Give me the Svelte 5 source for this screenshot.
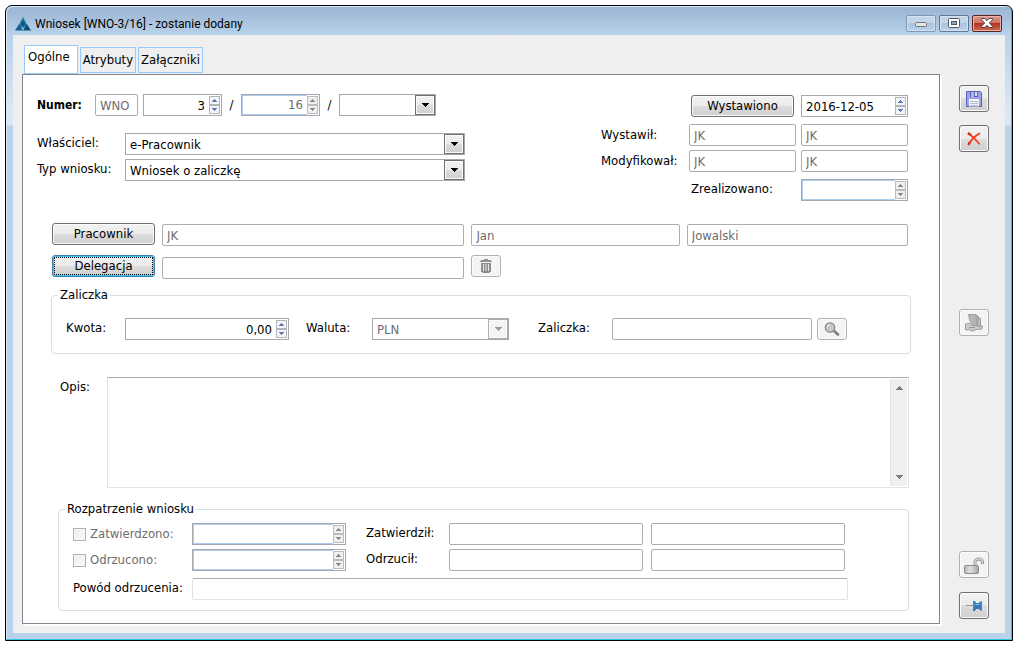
<script lang="ts">
  let activeTab = $state('Ogólne');
  const tabs = ['Ogólne', 'Atrybuty', 'Załączniki'];

  let amount = $state('0,00');
  let number = $state('3');
  let issueDate = $state('2016-12-05');
  let description = $state('');
</script>

{#snippet spinner(id: string, label: string, value: string, disabled: boolean, alignRight: boolean)}
  <span class="spinner" class:off={disabled}>
    <input {id} aria-label={label} type="text" {value} {disabled} class:right={alignRight} />
    <span class="steps">
      <button type="button" {disabled} aria-label="Zwiększ"><svg width="5" height="3" viewBox="0 0 5 3"><path d="M2 0h1v1h1v1h1v1H0V2h1V1h1z" /></svg></button>
      <button type="button" {disabled} aria-label="Zmniejsz"><svg width="5" height="3" viewBox="0 0 5 3"><path d="M0 0h5v1H4v1H3v1H2V2H1V1H0z" /></svg></button>
    </span>
  </span>
{/snippet}

{#snippet combo(id: string, label: string, value: string, disabled: boolean)}
  <span class="combo" class:off={disabled}>
    <select {id} aria-label={label} {disabled}><option>{value}</option></select>
    <span class="drop"><svg width="7" height="4" viewBox="0 0 7 4"><path d="M0 0h7v1H6v1H5v1H4v1H3V3H2V2H1V1H0z" /></svg></span>
  </span>
{/snippet}

<div class="page">
  <div class="window">
    <header>
      <svg class="logo" width="16" height="14" viewBox="0 0 16 14">
        <path d="M8 0l3.500 6.500h-7z" fill="#1b7fa6" />
        <path d="M8 3l3.500 5L8 11 4.500 8z" fill="#0d5c86" />
        <path d="M4.400 6.500L8 13.500H0z" fill="#14618f" />
        <path d="M11.600 6.500L16 13.500H8z" fill="#0a4f7c" />
        <path d="M4.500 7.500L8 10.500l3.500-3" fill="none" stroke="#4fa3c4" stroke-width=".6" />
      </svg>
      <h1>Wniosek [WNO-3/16] - zostanie dodany</h1>
      <div class="caption">
        <button type="button" aria-label="Minimalizuj">
          <svg width="12" height="5" viewBox="0 0 12 5"><rect x=".5" y=".5" width="11" height="4" rx="1" fill="#e6e6e6" stroke="#6b7480" /></svg>
        </button>
        <button type="button" class="max" aria-label="Maksymalizuj">
          <svg width="12" height="10" viewBox="0 0 12 10"><rect x=".5" y=".5" width="11" height="9" rx="1" fill="#fff" stroke="#4f5a68" /><rect x="3.500" y="3.500" width="5" height="3" fill="#8fa8c6" stroke="#4f5a68" /></svg>
        </button>
        <button type="button" class="close" aria-label="Zamknij">
          <svg width="12" height="10" viewBox="0 0 12 10"><path d="M.5.5h3.300L6 2.700 8.200.5h3.300v1.300L8.300 5l3.200 3.200v1.300H8.200L6 7.300 3.800 9.500H.5V8.200L3.700 5 .5 1.800z" fill="#fff" stroke="#4a4450" /></svg>
        </button>
      </div>
    </header>

    <div class="client">
      <main>
        <div class="tabs" role="tablist">
          {#each tabs as tab}
            <button type="button" role="tab" aria-selected={activeTab === tab} class:active={activeTab === tab} onclick={() => (activeTab = tab)}>{tab}</button>
          {/each}
        </div>

        <form class="panel" onsubmit={(e) => e.preventDefault()}>
          <section class="top">
            <div class="ident">
              <div class="number">
                <label for="number" class="strong">Numer:</label>
                <input class="field" aria-label="Seria" value="WNO" disabled />
                {@render spinner('number', 'Numer', number, false, true)}
                <span class="slash">/</span>
                {@render spinner('year', 'Rok', '16', true, true)}
                <span class="slash">/</span>
                {@render combo('series', 'Rejestr', '', false)}
              </div>
              <div class="pair">
                <label for="owner">Właściciel:</label>
                {@render combo('owner', 'Właściciel', 'e-Pracownik', false)}
                <label for="kind">Typ wniosku:</label>
                {@render combo('kind', 'Typ wniosku', 'Wniosek o zaliczkę', false)}
              </div>
            </div>

            <div class="issue">
              <div class="issue-row">
                <button type="button" class="push">Wystawiono</button>
                {@render spinner('issued', 'Wystawiono', issueDate, false, false)}
              </div>
              <div class="signed">
                <label for="made">Wystawił:</label>
                <input id="made" class="field" value="JK" disabled />
                <input class="field" aria-label="Wystawił, operator" value="JK" disabled />
                <label for="changed">Modyfikował:</label>
                <input id="changed" class="field" value="JK" disabled />
                <input class="field" aria-label="Modyfikował, operator" value="JK" disabled />
              </div>
              <div class="issue-row">
                <label for="done">Zrealizowano:</label>
                {@render spinner('done', 'Zrealizowano', '', true, false)}
              </div>
            </div>
          </section>

          <section class="people">
            <button type="button" class="push">Pracownik</button>
            <input class="field" aria-label="Kod pracownika" value="JK" disabled />
            <input class="field" aria-label="Imię" value="Jan" disabled />
            <input class="field" aria-label="Nazwisko" value="Jowalski" disabled />
            <button type="button" class="push focused">Delegacja</button>
            <input class="field" aria-label="Delegacja" value="" disabled />
            <button type="button" class="push mini" disabled aria-label="Usuń delegację">
              <svg width="12" height="14" viewBox="0 0 12 14"><path d="M4 0h4v1h3v1h1v1H0V2h1V1h3z" fill="#909090" /><path d="M1 4h10v9H9.500v1h-7v-1H1z" fill="#8c8c8c" /><path d="M3 5h1v7H3zM5.500 5h1v7h-1zM8 5h1v7H8z" fill="#e8e8e8" /></svg>
            </button>
          </section>

          <fieldset class="advance">
            <legend>Zaliczka</legend>
            <div class="advance-row">
              <label for="amount">Kwota:</label>
              {@render spinner('amount', 'Kwota', amount, false, true)}
              <label for="currency" class="near">Waluta:</label>
              {@render combo('currency', 'Waluta', 'PLN', true)}
              <label for="advance" class="far">Zaliczka:</label>
              <input id="advance" class="field" value="" disabled />
              <button type="button" class="push mini" disabled aria-label="Szukaj">
                <svg width="16" height="14" viewBox="0 0 16 14"><path d="M9.500 8.500l4.500 4" stroke="#7d7d7d" stroke-width="2.600" stroke-linecap="round" /><circle cx="6" cy="5.500" r="4.700" fill="#c6c6c6" stroke="#8b8b8b" stroke-width="1.300" /><path d="M3.500 5a2.500 2.500 0 0 1 2.500-2.300" fill="none" stroke="#ededed" stroke-width="1.300" /></svg>
              </button>
            </div>
          </fieldset>

          <section class="notes">
            <label for="notes">Opis:</label>
            <div class="memo">
              <textarea id="notes" bind:value={description}></textarea>
              <div class="track">
                <svg width="7" height="4" viewBox="0 0 7 4"><path d="M3 0h1v1h1v1h1v1h1v1H0V3h1V2h1V1h1z" fill="#7d7d7d" /></svg>
                <svg width="7" height="4" viewBox="0 0 7 4"><path d="M0 0h7v1H6v1H5v1H4v1H3V3H2V2H1V1H0z" fill="#7d7d7d" /></svg>
              </div>
            </div>
          </section>

          <fieldset class="review">
            <legend>Rozpatrzenie wniosku</legend>
            <div class="review-grid">
              <label class="check"><input type="checkbox" disabled />Zatwierdzono:</label>
              {@render spinner('approved', 'Data zatwierdzenia', '', true, false)}
              <label for="approver" class="who">Zatwierdził:</label>
              <div class="both">
                <input id="approver" class="field" value="" disabled />
                <input class="field" aria-label="Zatwierdził, operator" value="" disabled />
              </div>
              <label class="check"><input type="checkbox" disabled />Odrzucono:</label>
              {@render spinner('rejected', 'Data odrzucenia', '', true, false)}
              <label for="rejecter" class="who">Odrzucił:</label>
              <div class="both">
                <input id="rejecter" class="field" value="" disabled />
                <input class="field" aria-label="Odrzucił, operator" value="" disabled />
              </div>
            </div>
            <div class="reason">
              <label for="reason">Powód odrzucenia:</label>
              <input id="reason" class="field pale" value="" />
            </div>
          </fieldset>
        </form>
      </main>

      <aside>
        <button type="button" class="push tool" aria-label="Zapisz">
          <svg width="16" height="16" viewBox="0 0 16 16">
            <path d="M.5.5h14l1 1v14H.5z" fill="#9da2ee" stroke="#5c61b5" />
            <path d="M4 1h8v5H4z" fill="#5a62b4" /><path d="M5 1h3v5H5z" fill="#aeb6e8" /><path d="M9 1h2v4H9z" fill="#dfe4f6" />
            <path d="M3 8h10v7.500H3z" fill="#f4f6fc" /><path d="M4 10.500h8M4 12.500h8M4 14.500h8" stroke="#b4bacb" />
          </svg>
        </button>
        <button type="button" class="push tool" aria-label="Anuluj">
          <svg width="14" height="14" viewBox="0 0 14 14"><path d="M1.500 1.500C5 4 9 8 12.500 12" fill="none" stroke="#ff3b18" stroke-width="1.600" stroke-linecap="round" /><path d="M12.500 1.500C8 4 4 8 1.800 12.500" fill="none" stroke="#f23310" stroke-width="1.600" stroke-linecap="round" /><path d="M1 1l3 2.200M2.800 10L1.400 13" stroke="#e8240f" stroke-width="2.200" /></svg>
        </button>
        <span class="grow-a"></span>
        <button type="button" class="push tool" disabled aria-label="Dokumenty">
          <svg width="18" height="18" viewBox="0 0 18 18">
            <path d="M13 3.500l2.500 1v9h-4z" fill="#c6c6c6" stroke="#9a9a9a" />
            <path d="M10.500 1.500l2.500.5v11h-3z" fill="#bdbdbd" stroke="#959595" />
            <path d="M3.500.5H11l.5 12-4.500-2.500C5 8 4 4 3.500.5z" fill="#b8b8b8" stroke="#a0a0a0" />
            <path d="M.5 10c3-1.500 5-.5 7 1.500h4l1.500 1 4.500-.5-.5 3-5.500.5-4 1.500-4-1.500-3 .5z" fill="#cbcbcb" stroke="#9c9c9c" />
            <path d="M4 13.500h6" stroke="#979797" />
          </svg>
        </button>
        <span class="grow-b"></span>
        <button type="button" class="push tool" disabled aria-label="Odblokuj">
          <svg width="20" height="18" viewBox="0 0 20 18">
            <defs><linearGradient id="lock" x2="1" y2="0"><stop stop-color="#b5b5b5" /><stop offset=".4" stop-color="#e2e2e2" /><stop offset="1" stop-color="#a3a3a3" /></linearGradient></defs>
            <path d="M11 9V5.500a4 4 0 0 1 7.500 0V8" fill="none" stroke="#919191" stroke-width="3" /><path d="M11 9V5.500a4 4 0 0 1 7.500 0V7.500" fill="none" stroke="#dadada" stroke-width="1.400" />
            <rect x=".5" y="9.500" width="14" height="8" rx="1.500" fill="url(#lock)" stroke="#8b8b8b" />
          </svg>
        </button>
        <button type="button" class="push tool pin" aria-label="Przypnij">
          <svg width="16" height="10" viewBox="0 0 16 10"><path d="M0 4.500h8" stroke="#9b9b9b" /><path d="M7 0h2l1 2h3l1-1.500h2v9h-2L13 8h-3l-1 2H7z" fill="#2f77bd" /><path d="M9.500 3.500h4" stroke="#8fc4ee" /><path d="M8 1v7M15 1.500v7" stroke="#5b9fd8" stroke-width=".8" /></svg>
        </button>
      </aside>
    </div>
  </div>
</div>

<style>
  :global(body) { margin: 0; background: #fff; }
  * { box-sizing: border-box; }

  .page {
    display: flex;
    min-height: 100vh;
    padding: 5px;
    color: #000;
    font: 13px/14px 'DejaVu Sans Condensed', 'DejaVu Sans', sans-serif;
  }
  button, input, select, textarea { margin: 0; padding: 0; font: inherit; color: inherit; border-radius: 0; }
  svg { display: block; flex: none; }

  .window {
    flex: 1;
    display: flex;
    flex-direction: column;
    min-width: 0;
    padding: 1px 7px 7px;
    border: 1px solid #000;
    border-radius: 7px 7px 0 0;
    box-shadow: inset -1px -1px #2cc9dd, inset 1px 1px #dce9f7;
    background: linear-gradient(#99b4d1, #b9d1ea 29px, #d9e6f4 100px, #dbe7f5 119px, #b9d1ea 120px);
  }

  header { display: flex; align-items: center; height: 28px; padding: 0 2px; }
  .logo { margin: 5px 4px 0 0; }
  h1 { flex: 1; margin: 6px 0 0; font: 12px/16px Roboto, 'Open Sans', sans-serif; white-space: nowrap; }
  .caption { display: flex; gap: 3px; margin: 4px 1px 0 0; }
  .caption button {
    display: grid;
    place-items: center;
    width: 30px;
    height: 17px;
    border: 1px solid #8097b3;
    border-radius: 2px;
    background: linear-gradient(#c3d5e9 50%, #abc3dd 50%, #bdd2ea);
    box-shadow: inset 0 0 0 1px #d5e3f2;
  }
  .caption button:first-child { padding-top: 3px; }
  .caption .max { border-color: #5f7896; }
  .caption .close { border-color: #5b2020; background: linear-gradient(#dd9a8c, #cf7263 48%, #b53320 50%, #cf6a50); box-shadow: inset 0 0 0 1px #e8b4aa; }

  .client { flex: 1; display: flex; gap: 19px; padding: 0 16px 0 9px; background: #efefef; }
  main { flex: 1; min-width: 0; display: flex; flex-direction: column; padding: 10px 0 9px; }

  .tabs { display: flex; align-items: center; gap: 2px; height: 29px; padding-left: 2px; }
  .tabs button { height: 26px; padding: 0 2px; border: 1px solid #99c8fa; background: #efefef; white-space: nowrap; }
  .tabs .active { height: 29px; padding: 0 7px 5px 3px; background: #fff; }

  .panel { flex: 1; border: 1px solid #83838f; background: #fff; padding: 19px 0 12px; box-shadow: 2px 2px #fff; }

  .field {
    width: 100%;
    min-width: 0;
    height: 22px;
    padding: 1px 5px 0 4px;
    border: 1px solid #abadb0;
    border-radius: 2px;
    background: #fff;
  }
  .field:disabled { color: #6d6d6d; }
  .pale { border-color: #abadb3 #e2e3ea #e2e3ea; }

  .spinner { display: flex; min-width: 0; height: 22px; padding-right: 1px; border: 1px solid #a7a8ad; background: #fff; }
  .spinner input { flex: 1; width: 0; min-width: 0; padding: 1px 4px 0; border: 0; background: transparent; outline-offset: -1px; }
  .spinner .right { text-align: right; }
  .spinner.off input { color: #6d6d6d; border: 1px solid #a9cdf0; border-right: 0; padding-top: 0; }
  .steps { display: flex; flex-direction: column; justify-content: center; width: 11px; }
  .steps button { display: grid; place-items: center; height: 9px; border: 1px solid #b4b4ba; background: #f3f4f7; color: #5f74bd; }
  .steps svg, .drop svg { fill: currentColor; }
  .steps button:disabled { color: #8b8b8b; background: #efefef; border-color: #bcbcbc; }

  .combo { display: grid; grid-template-columns: minmax(0, 1fr) 20px; height: 22px; min-width: 0; border: 1px solid #a7a8ad; background: #fff; }
  .combo select { grid-area: 1 / 1 / 2 / 3; width: 100%; padding: 1px 22px 0 4px; border: 0; background: transparent; appearance: none; }
  .combo select:disabled { color: #6d6d6d; opacity: 1; }
  .drop {
    grid-area: 1 / 2;
    display: grid;
    place-items: center;
    border: 1px solid #707070;
    background: linear-gradient(#f2f2f2, #ebebeb 50%, #dddddd 50%, #cfcfcf);
    box-shadow: inset 0 0 0 1px #fbfbfb;
    pointer-events: none;
  }
  .off .drop { border-color: #a9b0b5; background: #f4f4f4; color: #9b9b9b; }

  .push {
    display: grid;
    place-items: center;
    height: 22px;
    border: 1px solid #707070;
    border-radius: 3px;
    background: linear-gradient(#f2f2f2, #ebebeb 50%, #dddddd 50%, #cfcfcf);
    box-shadow: inset 0 0 0 1px #fbfbfb;
  }
  .push:disabled { border-color: #adb2b5; background: #f4f4f4; }
  .focused { border-color: #3c7fb1; box-shadow: inset 0 0 0 1px #46c4ee; outline: 1px dotted #000; outline-offset: -3px; }
  .mini { width: 30px; }
  .tool { width: 30px; height: 27px; }

  .top { display: grid; grid-template-columns: minmax(0, 1fr) 307px; gap: 136px; padding: 0 31px 0 14px; }
  .number { display: flex; align-items: center; margin-bottom: 17px; }
  .number .strong { flex: none; width: 58px; font-size: 12px; font-weight: bold; }
  .number .field { flex: 0 1 43px; margin-right: 5px; }
  .number > :global(.spinner) { flex: 0 1 79px; }
  .number > :global(.combo) { flex: 0 1 97px; }
  .slash { flex: none; width: 19px; text-align: center; }
  .pair { display: grid; grid-template-columns: 88px minmax(0, 1fr); gap: 4px 0; }
  .pair label { padding-top: 3px; }
  .issue { padding-top: 1px; }
  .issue-row { display: grid; grid-template-columns: 103px 107px; gap: 7px; justify-content: end; }
  .issue-row label { padding-top: 3px; }
  .signed { display: grid; grid-template-columns: 83px 107px 107px; gap: 4px 5px; justify-content: end; margin: 7px 0; }
  .signed label { padding-top: 4px; }

  .people {
    display: grid;
    grid-template-columns: 103px minmax(0, 302fr) minmax(0, 208fr) minmax(0, 221fr);
    grid-template-rows: 23px 24px;
    gap: 9px 7px;
    padding: 22px 31px 9px 29px;
  }
  .people .field { align-self: end; }

  fieldset { min-width: 0; padding: 0; border: 1px solid #d5dfe5; border-radius: 4px; }
  legend { height: 14px; margin-left: 6px; padding: 0 2px; }

  .advance { margin: 0 28px; }
  .advance-row {
    display: grid;
    grid-template-columns: 59px minmax(0, 164fr) 83px minmax(0, 137fr) 103px minmax(0, 200fr) 35px;
    padding: 16px 63px 13px 14px;
  }
  .advance-row label { padding-top: 3px; }
  .advance-row .near { padding-left: 17px; }
  .advance-row .far { padding-left: 29px; }
  .advance-row .push { justify-self: end; }

  .notes { display: flex; padding: 23px 30px 14px 37px; }
  .notes label { width: 47px; padding-top: 3px; }
  .memo { flex: 1; display: flex; height: 111px; padding: 1px; border: 1px solid #e2e3ea; border-top-color: #abadb3; }
  textarea { flex: 1; min-width: 0; padding: 2px 4px; border: 0; resize: none; background: transparent; }
  .track { display: flex; flex-direction: column; justify-content: space-between; align-items: center; width: 17px; padding: 7px 0; background: #efefef; border-left: 1px solid #e3e3e3; }

  .review { margin: 0 30px 0 35px; }
  .review-grid { display: grid; grid-template-columns: 119px minmax(0, 154fr) 103px minmax(0, 399fr); gap: 4px 0; padding: 7px 60px 0 14px; }
  .check { display: flex; align-items: center; gap: 4px; color: #6d6d6d; }
  .check input { appearance: none; width: 13px; height: 13px; border: 1px solid #b1b1b1; background: linear-gradient(135deg, #ececec, #fbfbfb); box-shadow: inset 0 0 0 1px #f7f7f7; }
  .who { padding: 3px 0 0 20px; }
  .both { display: flex; gap: 8px; padding-right: 3px; }
  .reason { display: flex; padding: 7px 60px 10px 14px; }
  .reason label { flex: none; width: 119px; padding-top: 3px; }

  aside { display: flex; flex-direction: column; padding: 50px 0 14px; }
  aside .tool:first-child { margin-bottom: 13px; }
  aside .pin { margin-top: 14px; }
  .grow-a { flex: 157; }
  .grow-b { flex: 215; }
</style>
